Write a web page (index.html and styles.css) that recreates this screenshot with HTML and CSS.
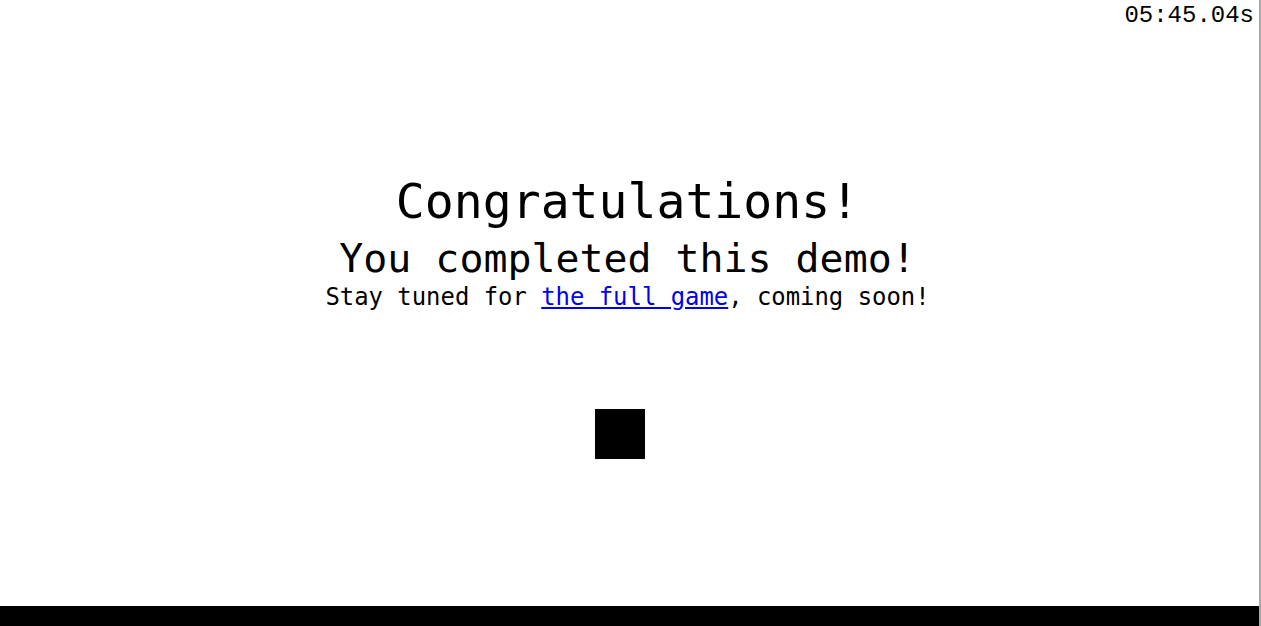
FILE: index.html
```html
<!DOCTYPE html>
<html lang="en">
<head>
<meta charset="utf-8">
<title>Demo complete</title>
<link rel="stylesheet" href="styles.css">
</head>
<body>
<div class="screen">
  <div class="stage">
    <div class="hud"><span class="timer">05:45.04s</span></div>
    <div class="message">
      <h1 class="title">Congratulations!</h1>
      <h2 class="subtitle">You completed this demo!</h2>
      <p class="note">Stay tuned for <a href="#" class="link">the full game</a>, coming soon!</p>
    </div>
    <div class="player"></div>
  </div>
  <div class="floor"></div>
</div>
</body>
</html>
```
FILE: styles.css
```css
html, body {
  margin: 0;
  padding: 0;
  background: #ffffff;
}
body {
  width: 1261px;
  height: 626px;
  overflow: hidden;
}
.screen {
  width: 1259px;
  height: 626px;
  border-right: 2px solid #a8a8a8;
  display: flex;
  flex-direction: column;
}
.stage {
  position: relative;
  flex: 1;
}
.hud {
  display: flex;
  justify-content: flex-end;
  padding: 2px 5px 0 0;
}
.timer {
  font-family: "Liberation Mono", "Courier New", monospace;
  font-size: 24px;
  line-height: 28px;
  color: #000;
}
.message {
  margin-top: 141px;
  padding-right: 4px;
  text-align: center;
  font-family: "DejaVu Sans Mono", monospace;
  color: #000;
}
.title {
  margin: 0;
  font-weight: normal;
  font-size: 48.1px;
  line-height: 60px;
}
.subtitle {
  margin: 5px 0 0;
  font-weight: normal;
  font-size: 39.9px;
  line-height: 44px;
}
.note {
  margin: 3px 0 0;
  font-size: 23.9px;
  line-height: 28px;
}
.link {
  color: #0000ee;
  text-decoration: underline;
}
.player {
  position: absolute;
  left: 595px;
  top: 409px;
  width: 50px;
  height: 50px;
  background: #000;
}
.floor {
  height: 20px;
  background: #000;
}
```
